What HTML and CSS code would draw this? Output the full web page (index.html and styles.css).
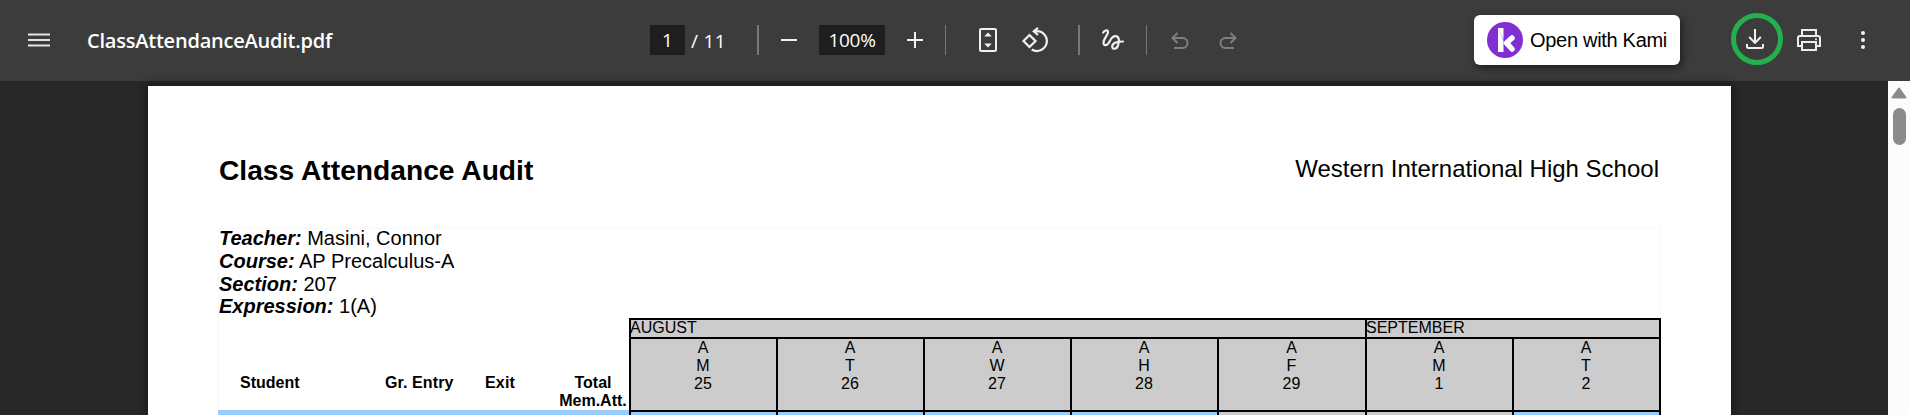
FILE: index.html
```html
<!DOCTYPE html>
<html lang="en">
<head>
<meta charset="utf-8">
<title>ClassAttendanceAudit.pdf</title>
<link rel="stylesheet" href="styles.css">
</head>
<body>
<header class="toolbar">
  <div class="left">
    <svg class="menu" width="22" height="14" viewBox="0 0 22 14"><path d="M0 1.5h22M0 7h22M0 12.5h22" stroke="#e4e4e4" stroke-width="2.2"/></svg>
    <span class="filename">ClassAttendanceAudit.pdf</span>
  </div>
  <div class="center">
    <span class="field page-field">1</span>
    <span class="page-total">/ 11</span>
    <i class="divider d1"></i>
    <svg class="minus" width="16" height="16" viewBox="0 0 16 16"><path d="M0 8h16" stroke="#f1f1f1" stroke-width="2"/></svg>
    <span class="field zoom-field">100%</span>
    <svg class="plus" width="16" height="16" viewBox="0 0 16 16"><path d="M0 8h16M8 0v16" stroke="#f1f1f1" stroke-width="2"/></svg>
    <i class="divider thin d2"></i>
    <svg class="fit" width="18" height="24" viewBox="0 0 18 24"><rect x="1" y="1" width="16" height="22" rx="1.2" fill="none" stroke="#f1f1f1" stroke-width="2"/><path d="M5.2 8.5 9 4.5l3.8 4zM5.2 15.5 9 19.5l3.8-4z" fill="#f1f1f1"/></svg>
    <svg class="rotate" width="26" height="26" viewBox="0 0 26 26"><path d="M7.5 8 13.5 14 7.5 20 1.5 14z" fill="none" stroke="#f1f1f1" stroke-width="2.2"/><path d="M11.800 4.200h3.100a9.900 9.900 0 1 1-5.200 18.300M16 .8l-4.200 3.400L16 8" fill="none" stroke="#f1f1f1" stroke-width="2.200"/></svg>
    <i class="divider d3"></i>
    <svg class="draw" width="22" height="22" viewBox="0 0 22 22"><path d="M1.200 3.600C2 1.800 5.800 0 6 3 6.200 6 1.500 9.500 1.500 13.500c0 3.800 3.200 3.200 5.300.3C8.600 11 9.800 7.200 13.300 7.200c4.200 0 4.200 5.300 2.700 9.300-1.400 4-5.800 4.300-5.800 1 0-3.200 4-5 10.800-5" fill="none" stroke="#f1f1f1" stroke-width="2.200" stroke-linecap="round"/></svg>
    <i class="divider thin d4"></i>
    <svg class="undo" width="18" height="17" viewBox="0 0 18 17"><path d="M6.500 1 1.500 6l5 5M1.500 6h10a5 5 0 0 1 0 10H3" fill="none" stroke="#7e7e7e" stroke-width="2"/></svg>
    <svg class="redo" width="18" height="17" viewBox="0 0 18 17"><path d="M11.500 1l5 5-5 5M16.500 6h-10a5 5 0 0 0 0 10H15" fill="none" stroke="#7e7e7e" stroke-width="2"/></svg>
  </div>
  <div class="right">
    <button class="kami"><svg width="36" height="36" viewBox="0 0 36 36"><circle cx="18" cy="18" r="18" fill="#812fd3"/><path d="M11 6h5.500v13M11 6v24h5.500V18" fill="#fff"/><path d="M25 16l-5.500 5 5.500 6" fill="none" stroke="#fff" stroke-width="5.500" stroke-linecap="round" stroke-linejoin="round"/></svg><span>Open with Kami</span></button>
    <span class="ring"><svg width="18" height="20" viewBox="0 0 18 20"><path d="M9 0v14M3.200 8 9 13.900 14.800 8" fill="none" stroke="#f1f1f1" stroke-width="2"/><path d="M1 15v2.500q0 1.500 1.500 1.500h13q1.500 0 1.500-1.500V15" fill="none" stroke="#f1f1f1" stroke-width="2"/></svg></span>
    <svg class="print" width="24" height="22" viewBox="0 0 24 22"><path d="M5 6V1h14v5M5 17H1V9q0-2 2-2h18q2 0 2 2v8h-4" fill="none" stroke="#ececec" stroke-width="2"/><path d="M5 13h14v8H5z" fill="none" stroke="#ececec" stroke-width="2"/><circle cx="19" cy="10.300" r="1" fill="#ececec"/></svg>
    <svg class="more" width="4" height="18" viewBox="0 0 4 18"><g fill="#f1f1f1"><circle cx="2" cy="2" r="2"/><circle cx="2" cy="9" r="2"/><circle cx="2" cy="16" r="2"/></g></svg>
  </div>
</header>
<main class="viewer">
  <article class="sheet">
    <div class="heading"><h1>Class Attendance Audit</h1><span class="school">Western International High School</span></div>
    <section class="report">
      <div class="info">
        <p><b>Teacher:</b> Masini, Connor</p>
        <p><b>Course:</b> AP Precalculus-A</p>
        <p><b>Section:</b> 207</p>
        <p><b>Expression:</b> 1(A)</p>
      </div>
      <div class="audit">
        <div class="labels">
          <div class="label-row"><span class="student">Student</span><span class="entry">Gr. Entry</span><span class="exit">Exit</span><span class="total">Total<br>Mem.Att.</span></div>
          <div class="band"></div>
        </div>
        <div class="calendar">
          <div class="month august">AUGUST</div><div class="month september">SEPTEMBER</div>
          <div class="day">A<br>M<br>25</div><div class="day">A<br>T<br>26</div><div class="day">A<br>W<br>27</div><div class="day">A<br>H<br>28</div><div class="day">A<br>F<br>29</div><div class="day">A<br>M<br>1</div><div class="day">A<br>T<br>2</div>
          <div class="cell"></div><div class="cell"></div><div class="cell"></div><div class="cell"></div><div class="cell off"></div><div class="cell off"></div><div class="cell"></div>
        </div>
      </div>
    </section>
  </article>
  <aside class="scrollbar">
    <svg width="16" height="12" viewBox="0 0 16 12"><path d="M8 1.500 14.500 10.500h-13z" fill="#8b8b8b" stroke="#8b8b8b" stroke-width="2" stroke-linejoin="round"/></svg>
    <i class="thumb"></i>
  </aside>
</main>
</body>
</html>
```

FILE: styles.css
```css
* { box-sizing: border-box; }
body { margin: 0; height: 415px; overflow: hidden; background: #282828; font-family: "Liberation Sans", Arial, sans-serif; color: #000; }
svg { display: block; flex: none; overflow: visible; }
.toolbar { height: 81px; background: #3c3c3c; display: grid; grid-template-columns: 650px 824px 436px; color: #fff; font-family: "Open Sans", "Noto Sans", sans-serif; }
.left, .center, .right { display: flex; align-items: center; height: 79px; }
.left { padding-left: 28px; gap: 37px; }
.filename { font-size: 20px; font-weight: 600; line-height: 28px; letter-spacing: -.22px; padding-top: 2px; }
.field { flex: none; height: 30px; line-height: 31px; background: #1e1e1e; text-align: center; font-size: 19px; }
.page-field { width: 35px; }
.page-total { width: 39px; margin-left: 6px; font-size: 19px; padding-top: 2px; letter-spacing: .3px; white-space: pre; }
.divider { flex: none; width: 2px; height: 30px; background: #777; }
.thin { width: 1px; }
.d1 { margin-left: 27px; }
.minus { margin-left: 22px; }
.zoom-field { width: 66px; margin-left: 22px; letter-spacing: -.3px; }
.plus { margin-left: 22px; }
.d2 { margin-left: 22px; }
.fit { margin-left: 33px; }
.rotate { margin-left: 25px; }
.d3 { margin-left: 30px; }
.draw { margin-left: 22px; }
.d4 { margin-left: 22px; }
.undo { margin-left: 24px; margin-top: 1px; }
.redo { margin-left: 30px; margin-top: 1px; }
.kami { flex: none; width: 206px; height: 50px; border: 0; border-radius: 6px; background: #fff; margin-top: 1px; padding: 0 0 0 13px; display: flex; align-items: center; gap: 7px; box-shadow: 2px 3px 8px #0008; font: 20px "Liberation Sans", Arial, sans-serif; letter-spacing: -.3px; color: #000; white-space: nowrap; }
.ring { flex: none; width: 52px; height: 52px; margin-left: 51px; margin-top: -2px; border: 5px solid #22b14c; border-radius: 50%; display: flex; align-items: center; justify-content: center; padding-right: 4px; }
.print { margin-left: 14px; }
.more { margin-left: 40px; }
.viewer { height: 334px; display: flex; justify-content: space-between; padding-left: 148px; }
.sheet { width: 1583px; height: 329px; margin-top: 5px; padding: 0 70px; background: #fff; box-shadow: 0 0 8px 2px #181818; }
.heading { height: 142px; padding: 65px 2px 0 1px; display: flex; justify-content: space-between; align-items: flex-start; }
h1 { margin: 0; font-size: 28.200px; line-height: 38px; }
.school { font-size: 24px; line-height: 36px; }
.report { border: 1px solid #f7f7f7; border-bottom: 0; height: 187px; }
.info { height: 89px; }
.info p { margin: 0; font-size: 20px; line-height: 22.800px; position: relative; top: -2px; }
.info b { font-style: italic; }
.audit { display: flex; height: 97px; margin-left: -1px; }
.labels { flex: none; width: 411px; }
.label-row { display: flex; height: 92px; padding: 56px 0 0 22px; font-size: 16px; font-weight: bold; line-height: 18px; white-space: nowrap; }
.student { width: 145px; }
.entry { width: 100px; letter-spacing: .1px; }
.exit { width: 74px; letter-spacing: .2px; }
.total { width: 68px; text-align: center; }
.band { height: 5px; background: #99ccff; }
.calendar { flex: none; width: 1032px; display: grid; grid-template-columns: 147px 147px 147px 147px 148px 147px 147px; grid-template-rows: 19px 73px 5px; border-right: 2px solid #000; }
.month, .day, .cell { border-left: 2px solid #000; border-top: 2px solid #000; background: #ccc; font-size: 16px; line-height: 18px; }
.month { line-height: 16px; text-indent: -1px; }
.august { grid-column: span 5; }
.september { grid-column: span 2; }
.day { text-align: center; line-height: 17.900px; padding-right: 1px; }
.cell { background: #99ccff; }
.off { background: #ccc; }
.scrollbar { width: 22px; background: #fcfcfc; display: flex; flex-direction: column; align-items: center; padding-top: 6px; gap: 9px; }
.thumb { width: 13px; height: 37px; border-radius: 7px; background: #8b8b8b; }
```
